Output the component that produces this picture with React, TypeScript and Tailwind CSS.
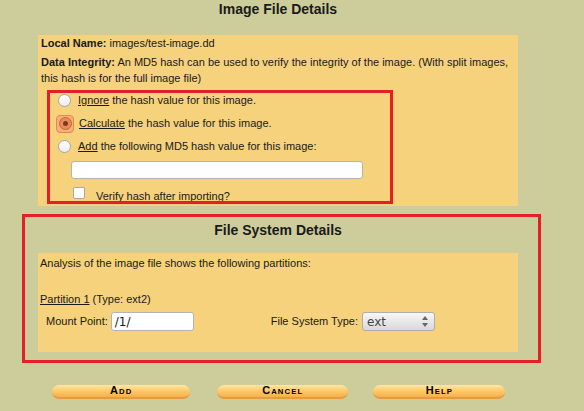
function Radio({ checked = false }: { checked?: boolean }) {
    if (checked) {
        return (
            <span className="ml-[15px] flex h-[18px] w-[18px] items-center justify-center rounded-[4px] border border-[#e9874a] bg-[#f6b07a]">
                <span className="flex h-[13px] w-[13px] items-center justify-center rounded-full border border-[#b86a3e] bg-[#f08a55]">
                    <span className="h-[5px] w-[5px] rounded-full bg-[#7a3a22]" />
                </span>
            </span>
        );
    }
    return <span className="ml-[17px] h-[13px] w-[13px] rounded-full border border-[#a8a8a8] bg-gradient-to-b from-[#ffffff] to-[#ececec]" />;
}

function PillButton({ label, className }: { label: string; className: string }) {
    return (
        <button
            className={`flex h-[14px] items-center justify-center rounded-full border-b-2 border-[#e89a3c] bg-gradient-to-b from-[#ffe7a4] via-[#fdc966] to-[#f6b04c] ${className}`}
        >
            <span className="inline-block scale-x-[1.1] text-[10px] leading-none font-bold tracking-[1px] text-black [font-variant:small-caps]">{label}</span>
        </button>
    );
}

export default function App() {
    return (
        <div className="relative h-[411px] w-[584px] overflow-hidden bg-[#cdcc9b] font-['Liberation_Sans',Arial,sans-serif] text-[11px] text-[#1a1a1a]">
            <h1 className="ml-[38px] w-[480px] text-center text-[14px] leading-[18px] font-bold">Image File Details</h1>

            {/* Image details */}
            <div className="mt-[17px] ml-[38px] h-[171px] w-[480px] bg-[#f5d27b] px-[3px]">
                <p className="leading-[16px]">
                    <b>Local Name:</b> images/test-image.dd
                </p>
                <p className="mt-[3px] leading-[16px]">
                    <b>Data Integrity:</b> An MD5 hash can be used to verify the integrity of the image. (With split images,
                    <br />
                    this hash is for the full image file)
                </p>

                <div className="mt-[3px]">
                    <div className="flex h-[23px] items-center">
                        <Radio />
                        <span className="ml-[7px]">
                            <u>Ignore</u> the hash value for this image.
                        </span>
                    </div>
                    <div className="flex h-[23px] items-center">
                        <Radio checked />
                        <span className="ml-[5px]">
                            <u>Calculate</u> the hash value for this image.
                        </span>
                    </div>
                    <div className="flex h-[23px] items-center">
                        <Radio />
                        <span className="ml-[7px]">
                            <u>Add</u> the following MD5 hash value for this image:
                        </span>
                    </div>
                    <div className="mt-[3px] ml-[30px] h-[18px] w-[292px] rounded-[3px] border border-[#b4b4b4] bg-white" />
                    <div className="mt-[8px] flex h-[18px] items-center">
                        <span className="ml-[32px] h-[12px] w-[12px] self-start rounded-[2px] border border-[#a8a8a8] bg-white" />
                        <span className="ml-[11px]">Verify hash after importing?</span>
                    </div>
                </div>
            </div>

            {/* File system details */}
            <div className="mt-[8px] ml-[22px] w-[519px] border-[3px] border-[#e61e27] pt-[4px] pr-[20px] pb-[8px] pl-[13px]">
                <h2 className="text-center text-[14px] leading-[18px] font-bold">File System Details</h2>
                <div className="mt-[14px] h-[99px] bg-[#f5d27b] px-[2px] pt-[2px]">
                    <p className="leading-[16px]">Analysis of the image file shows the following partitions:</p>
                    <p className="mt-[20px] leading-[16px]">
                        <u>Partition 1</u> (Type: ext2)
                    </p>
                    <div className="mt-[5px] flex h-[19px] items-center">
                        <span className="ml-[6px]">Mount Point:</span>
                        <div className="ml-[3px] flex h-[19px] w-[83px] items-center rounded-[3px] border border-[#b4b4b4] bg-white pl-[3px] font-['DejaVu_Sans',sans-serif] text-[12px]">
                            /1/
                        </div>
                        <span className="ml-[77px]">File System Type:</span>
                        <div className="ml-[4px] flex h-[19px] w-[73px] items-center justify-between rounded-[3px] border border-[#adadad] bg-gradient-to-b from-[#f7f7f7] to-[#d9d9d9] pr-[6px] pl-[4px] font-['DejaVu_Sans',sans-serif] text-[12px] text-[#444]">
                            <span>ext</span>
                            <span className="flex flex-col items-center gap-[3px]">
                                <span className="h-0 w-0 border-x-[3px] border-b-[4px] border-x-transparent border-b-[#666]" />
                                <span className="h-0 w-0 border-x-[3px] border-t-[4px] border-x-transparent border-t-[#666]" />
                            </span>
                        </div>
                    </div>
                </div>
            </div>

            <div className="mt-[22px] flex">
                <PillButton label="Add" className="ml-[52px] w-[138px]" />
                <PillButton label="Cancel" className="ml-[27px] w-[131px]" />
                <PillButton label="Help" className="ml-[25px] w-[132px]" />
            </div>

            {/* annotation box over the hash options */}
            <div className="pointer-events-none absolute top-[90px] left-[47px] h-[114px] w-[346px] border-[3px] border-[#e61e27]" />
        </div>
    );
}
